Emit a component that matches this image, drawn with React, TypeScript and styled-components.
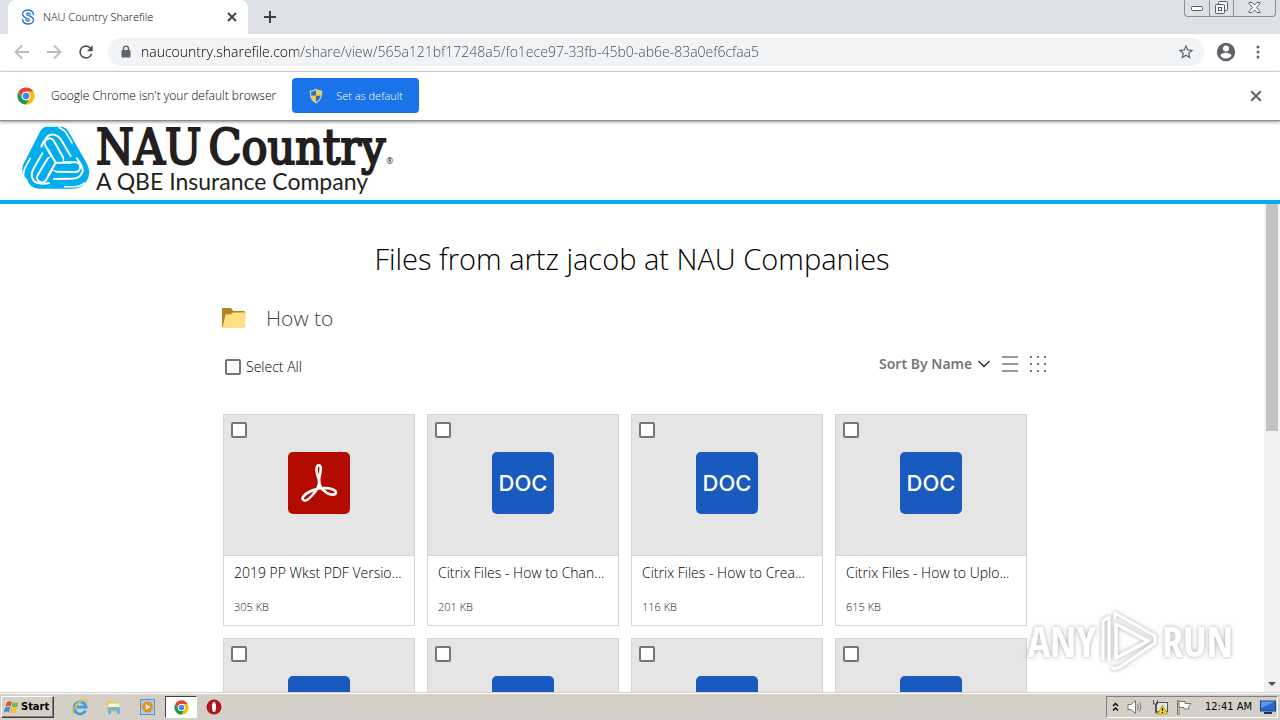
import React from "react";
import styled, { createGlobalStyle, css } from "styled-components";

const uiFont = '"Open Sans", "Noto Sans", sans-serif';
const pageFont = '"Noto Sans", "Open Sans", sans-serif';
const classicFont = '"DejaVu Sans Condensed", "DejaVu Sans", sans-serif';

const GlobalStyle = createGlobalStyle`
  * { box-sizing: border-box; }
  body { margin: 0; overflow: hidden; background: #fff; font-family: ${pageFont}; }
  button, input, select { font: inherit; color: inherit; margin: 0; }
  h1, h2, h3, p { margin: 0; font-weight: 400; }
  svg { display: block; flex: none; }
`;

const Desktop = styled.div`
  display: flex;
  flex-direction: column;
  height: 100vh;
`;

/* ---------- browser chrome ---------- */

const TabStrip = styled.div`
  display: flex;
  align-items: flex-start;
  flex: none;
  height: 34px;
  padding-left: 8px;
  background: #dee1e6;
`;

const Tab = styled.div`
  display: flex;
  align-items: center;
  width: 240px;
  height: 34px;
  padding: 0 10px 0 13px;
  border-radius: 8px 8px 0 0;
  background: #fff;
  color: #000;
  font: 300 11px/16px ${uiFont};
`;

const TabTitle = styled.span`
  flex: 1;
  padding-left: 8px;
  white-space: nowrap;
`;

const IconButton = styled.button<{ $size?: number }>`
  display: flex;
  align-items: center;
  justify-content: center;
  flex: none;
  width: ${(p) => p.$size ?? 28}px;
  height: ${(p) => p.$size ?? 28}px;
  padding: 0;
  border: 0;
  background: transparent;
`;

const NewTab = styled(IconButton)`
  margin: 3px 0 0 8px;
`;

const WindowControls = styled.div`
  display: flex;
  height: 17px;
  margin: 0 4px 0 auto;
  border: 1px solid #8b8f96;
  border-top: 0;
  border-radius: 0 0 4px 4px;
`;

const WindowButton = styled.button<{ $wide?: boolean }>`
  display: flex;
  align-items: center;
  justify-content: center;
  width: ${(p) => (p.$wide ? 42 : 24)}px;
  padding: 0 0 1px;
  border: 0;
  background: transparent;
  & + & { border-left: 1px solid #8b8f96; }
`;

const Toolbar = styled.div`
  display: flex;
  align-items: center;
  flex: none;
  height: 38px;
  padding: 0 8px 2px;
  gap: 4px;
  background: #fff;
  border-bottom: 1px solid #dadce0;
`;

const AddressBar = styled.div`
  display: flex;
  align-items: center;
  flex: 1;
  height: 28px;
  margin: 0 4px;
  padding: 0 4px 0 12px;
  border-radius: 14px;
  background: #f1f3f4;
`;

const AddressInput = styled.input`
  flex: 1;
  min-width: 0;
  height: 24px;
  padding: 0;
  margin-left: 9px;
  border: 0;
  outline: 0;
  font: 300 14px/20px ${uiFont};
  color: transparent;
  background: linear-gradient(to right, #000 157px, #45494d 157px);
  background-clip: text;
  -webkit-background-clip: text;
`;

const InfoBar = styled.div`
  display: flex;
  align-items: center;
  flex: none;
  height: 49px;
  padding: 0 14px 1px 17px;
  background: #fff;
  color: #000;
  font: 300 12px/16px ${uiFont};
  position: relative;
  border-bottom: 1px solid #8e8e8e;
  box-shadow: 0 1px 3px rgba(0, 0, 0, 0.45);
`;

const InfoText = styled.p`
  padding: 0 16px;
  font-weight: 300;
`;

const DefaultButton = styled.button`
  display: flex;
  align-items: center;
  gap: 13px;
  height: 35px;
  padding: 0 16px 0 17px;
  border: 0;
  border-radius: 4px;
  background: #1a73e8;
  color: #fff;
  font-size: 11px;
`;

const Spacer = styled.div`
  flex: 1;
`;

/* ---------- page ---------- */

const SiteHeader = styled.header`
  display: flex;
  align-items: flex-start;
  flex: none;
  height: 83px;
  padding: 5px 0 0 22px;
  gap: 6px;
  border-bottom: 4px solid #00aeef;
  background: #fff;
  color: #231f20;
`;

const Wordmark = styled.div`
  display: flex;
  flex-direction: column;
`;

const BrandName = styled.div`
  display: flex;
  align-items: baseline;
  font: 48px/42px "DejaVu Serif Condensed", "DejaVu Serif", serif;
  white-space: nowrap;
  -webkit-text-stroke: 2px #231f20;
`;

const BrandWord = styled.span`
  margin-right: 7px;
  & + & { margin-right: 1px; }
`;

const Registered = styled.span`
  -webkit-text-stroke: 0;
  font: 8px/8px ${pageFont};
`;

const BrandLine = styled.span`
  font: 400 23px/26px Lato, sans-serif;
  white-space: nowrap;
`;

const Viewport = styled.div`
  display: flex;
  flex: 1;
  min-height: 0;
`;

const Page = styled.main`
  flex: 1;
  overflow: hidden;
  padding-top: 34px;
`;

const Title = styled.h1`
  font: 300 29px/42px "Open Sans", ${pageFont};
  text-align: center;
  color: #000;
`;

const Content = styled.section`
  max-width: 840px;
  margin: 0 auto;
  padding: 0 0 0 10px;
`;

const FolderRow = styled.div`
  display: flex;
  align-items: center;
  gap: 20px;
  height: 32px;
  margin-top: 22px;
`;

const FolderName = styled.h2`
  font: 300 21px/32px "Open Sans", ${pageFont};
  color: #444;
`;

const ListTools = styled.div`
  display: flex;
  align-items: center;
  justify-content: space-between;
  height: 24px;
  margin-top: 18px;
  padding-left: 3px;
`;

const CheckLabel = styled.label`
  display: flex;
  align-items: center;
  gap: 5px;
  margin-top: 6px;
  font: 300 14px/20px ${uiFont};
  color: #000;
`;

const Check = styled.input.attrs({ type: "checkbox" })`
  appearance: none;
  flex: none;
  width: 16px;
  height: 16px;
  border: 2px solid #767676;
  border-radius: 2px;
  background: #fff;
`;

const ViewTools = styled.div`
  display: flex;
  align-items: center;
`;

const SortSelect = styled.select`
  appearance: none;
  padding: 0;
  border: 0;
  background: transparent;
  color: #777;
  font: 600 14px/20px ${pageFont};
`;

const SortLabel = styled.label`
  display: flex;
  align-items: center;
  gap: 5px;
  margin-right: 6px;
`;

const Grid = styled.ul`
  display: grid;
  grid-template-columns: repeat(auto-fill, 192px);
  gap: 12px;
  margin: 38px 0 0;
  padding: 0 0 0 1px;
  list-style: none;
`;

const Card = styled.li`
  height: 212px;
  border: 1px solid #d4d4d4;
  background: #fff;
`;

const Preview = styled.div`
  display: grid;
  grid-template-columns: 16px 1fr 16px;
  align-items: start;
  height: 141px;
  padding: 7px;
  border-bottom: 1px solid #d4d4d4;
  background: #e5e5e5;
`;

const tile = css`
  display: flex;
  align-items: center;
  justify-content: center;
  width: 62px;
  height: 62px;
  margin: 30px auto 0;
  border-radius: 5px;
`;

const DocTile = styled.div`
  ${tile}
  background: #185abd;
  color: #fff;
  font: 500 22px/28px Inter, sans-serif;
`;

const PdfTile = styled.div`
  ${tile}
  background: #b30b00;
`;

const FileName = styled.h3`
  padding: 7px 10px 0;
  font: 300 14px/20px ${uiFont};
  color: #000;
  white-space: nowrap;
`;

const FileSize = styled.p`
  padding: 16px 10px 0;
  font: 300 11px/16px ${uiFont};
  color: #222;
`;

const ScrollTrack = styled.div`
  display: flex;
  flex-direction: column;
  justify-content: space-between;
  align-items: center;
  width: 16px;
  padding-bottom: 6px;
  background: #f1f1f1;
`;

const ScrollThumb = styled.div`
  width: 12px;
  height: 47%;
  background: #c1c1c1;
`;

const Watermark = styled.div`
  position: fixed;
  right: 47px;
  bottom: 46px;
  display: flex;
  align-items: center;
  gap: 4px;
  color: #fff;
  font: 400 42px/66px "Open Sans Condensed", "Noto Sans ExtraCondensed", "Roboto Condensed", "Liberation Sans Narrow", Roboto, sans-serif;
  filter: drop-shadow(0 0 2px rgba(0, 0, 0, 0.35));
  pointer-events: none;
`;

/* ---------- taskbar ---------- */

const Taskbar = styled.footer`
  display: flex;
  align-items: center;
  flex: none;
  height: 28px;
  padding: 1px 2px 0 1px;
  border-top: 1px solid #d4d0c8;
  box-shadow: inset 0 1px 0 #fff;
  background: #d4d0c8;
  color: #000;
  font: 11px/16px ${classicFont};
`;

const StartButton = styled.button`
  display: flex;
  align-items: center;
  gap: 1px;
  height: 22px;
  padding: 0 4px 0 2px;
  margin-right: 9px;
  border: 1px solid;
  border-color: #fff #404040 #404040 #fff;
  box-shadow: inset -1px -1px 0 #808080;
  background: #d4d0c8;
  font: 700 11px/16px ${classicFont};
`;

const TaskButton = styled.button<{ $active?: boolean }>`
  display: flex;
  align-items: center;
  justify-content: center;
  width: ${(p) => (p.$active ? 32 : 34)}px;
  height: 22px;
  padding: 0;
  border: 1px solid;
  border-color: ${(p) => (p.$active ? "#404040 #fff #fff #404040" : "transparent")};
  background: ${(p) => (p.$active ? "#fff" : "transparent")};
`;

const Tray = styled.div`
  display: flex;
  align-items: center;
  gap: 8px;
  height: 22px;
  margin-left: auto;
  padding: 0 1px 0 5px;
  border: 1px solid;
  border-color: #808080 #fff #fff #808080;
`;

const Clock = styled.time`
  padding-left: 5px;
  white-space: nowrap;
`;

/* ---------- drawings ---------- */

const ShareFileIcon = () => (
  <svg width="14" height="16" viewBox="0 0 14 16" fill="none" stroke="#2f78c4" strokeLinecap="round" strokeWidth="1.400">
    <path d="M12.500 5.500C12 2.800 9.800 1 7 1 4 1 1.500 2.600 1.500 5c0 2.200 1.500 3 3.500 3.800 2 .7 3.300 1 3.300 2 0 .8-.6 1.200-1.400 1.200-1 0-1.700-.5-2-1.500" />
    <path d="M1.500 10.500C2 13.200 4.200 15 7 15c3 0 5.500-1.600 5.500-4 0-2.200-1.500-3-3.500-3.800-2-.7-3.300-1-3.300-2C5.700 4.400 6.300 4 7.100 4c1 0 1.700.5 2 1.500" />
  </svg>
);

const Cross = ({ size = 10, color = "#3c4043", weight = 1.8 }) => (
  <svg width={size} height={size} viewBox="0 0 10 10" stroke={color} strokeWidth={weight}>
    <path d="M1 1l8 8M9 1L1 9" />
  </svg>
);

const PlusIcon = () => (
  <svg width="14" height="14" viewBox="0 0 14 14" stroke="#3c4043" strokeWidth="2">
    <path d="M7 1v12M1 7h12" />
  </svg>
);

const Arrow = ({ flip = false }) => (
  <svg width="16" height="16" viewBox="0 0 16 16" fill="none" stroke="#babcbe" strokeWidth="1.800">
    <path d={flip ? "M1 8h13M8 1.500L14.500 8 8 14.500" : "M15 8H2M8 1.500L1.500 8 8 14.500"} />
  </svg>
);

const ReloadIcon = () => (
  <svg width="20" height="20" viewBox="0 0 24 24" fill="#4d5155">
    <path d="M17.650 6.350A7.960 7.960 0 0 0 12 4a8 8 0 1 0 7.730 10h-2.080A6 6 0 1 1 12 6c1.660 0 3.140.69 4.220 1.780L13 11h7V4l-2.350 2.350z" />
  </svg>
);

const LockIcon = () => (
  <svg width="12" height="14" viewBox="0 0 12 14">
    <rect x="1.500" y="5" width="9" height="7.500" rx="1" fill="#5f6368" />
    <path d="M3.500 5.500V3.600a2.500 2.500 0 0 1 5 0v1.900" fill="none" stroke="#5f6368" strokeWidth="1.400" />
  </svg>
);

const StarIcon = () => (
  <svg width="18" height="18" viewBox="0 0 24 24" fill="#5f6368">
    <path d="M22 9.240l-7.190-.62L12 2 9.190 8.630 2 9.240l5.460 4.730L5.820 21 12 17.270 18.180 21l-1.630-7.030L22 9.240zM12 15.400l-3.760 2.270 1-4.280-3.320-2.880 4.380-.38L12 6.100l1.710 4.040 4.380.38-3.320 2.880 1 4.280L12 15.400z" />
  </svg>
);

const ProfileIcon = () => (
  <svg width="22" height="22" viewBox="0 0 24 24" fill="#5f6368">
    <path d="M12 2a10 10 0 1 0 0 20 10 10 0 0 0 0-20zm0 3a3.300 3.300 0 1 1 0 6.600A3.300 3.300 0 0 1 12 5zm0 14.200a7.200 7.200 0 0 1-6-3.220c.03-2 4-3.080 6-3.080s5.970 1.090 6 3.080a7.200 7.200 0 0 1-6 3.220z" />
  </svg>
);

const MoreIcon = () => (
  <svg width="4" height="16" viewBox="0 0 4 16" fill="#5f6368">
    <circle cx="2" cy="3" r="1.500" /><circle cx="2" cy="8" r="1.500" /><circle cx="2" cy="13" r="1.500" />
  </svg>
);

const ChromeIcon = ({ size = 18 }) => (
  <svg width={size} height={size} viewBox="1 1 46 46">
    <circle cx="24" cy="24" r="22" fill="#fff" />
    <path d="M24 13h19A22 22 0 0 0 5 12.900L14.500 29.500A11 11 0 0 1 24 13z" fill="#ea4335" />
    <path d="M33.500 29.500L24 46A22 22 0 0 0 43.050 13H24a11 11 0 0 1 9.500 16.500z" fill="#fbbc04" />
    <path d="M14.500 29.500L4.950 13A22 22 0 0 0 24 46l9.500-16.500a11 11 0 0 1-19 0z" fill="#1e9a4b" />
    <circle cx="24" cy="24" r="11" fill="#fff" />
    <circle cx="24" cy="24" r="8.500" fill="#4285f4" />
  </svg>
);

const ShieldIcon = () => (
  <svg width="14" height="16" viewBox="0 0 14 16">
    <path d="M7 .5C5 2 3 2.500.8 2.500.6 8 1.500 12.500 7 15.500c5.500-3 6.400-7.500 6.200-13C11 2.500 9 2 7 .5z" fill="#c9ccd0" />
    <path d="M7 2C5.500 3 4 3.500 2.200 3.600 2.100 5.200 2.100 6.500 2.400 7.800H7z" fill="#2b6bc4" />
    <path d="M7 2c1.500 1 3 1.500 4.800 1.600.1 1.600.1 2.900-.2 4.200H7z" fill="#f8cf2c" />
    <path d="M2.400 7.800H7v6.300C4.500 12.700 2.900 10.600 2.400 7.800z" fill="#f8cf2c" />
    <path d="M11.600 7.800H7v6.300c2.500-1.400 4.100-3.500 4.600-6.300z" fill="#2b6bc4" />
  </svg>
);

const MinimizeIcon = () => (
  <svg width="13" height="6" viewBox="0 0 13 6"><rect x=".5" y="1.500" width="11" height="4" rx="1" fill="#fff" stroke="#555a63" /></svg>
);

const RestoreIcon = () => (
  <svg width="13" height="13" viewBox="0 0 13 13" fill="#f4f5f7" stroke="#555a63">
    <rect x="3.500" y=".5" width="9" height="9" rx="1" />
    <rect x=".5" y="3.500" width="9" height="9" rx="1" />
    <rect x="3.500" y="6.500" width="3" height="3" />
  </svg>
);

const WindowCloseIcon = () => (
  <svg width="13" height="11" viewBox="0 0 13 11">
    <path d="M1 .5h3L6.500 3 9 .5h3v1L8.500 5.500 12 9.500v1H9L6.500 8 4 10.500H1v-1l3.500-4L1 1.500z" fill="#fff" stroke="#555a63" />
  </svg>
);

const turns = [0, 120, 240];

const NauMark = () => (
  <svg width="68" height="64" viewBox="14 12 204 192">
    <path
      d="M86 14h46q14 1 22 15l55 96q12 24 2 46-12 26-40 29H66q-30-1-37-29-20-14-12-42l50-98q6-14 19-17z"
      fill="#00aeef"
    />
    <g transform="translate(115 122)" fill="none">
      {turns.map((turn) => (
        <g key={turn} transform={`rotate(${turn})`} stroke="#fff">
          <path d="M-18 -58L8 -12" strokeWidth="35" strokeLinecap="round" />
          <path d="M-44 -46Q-30 -82 -14 -84 6 -86 18 -66L46 -18" strokeWidth="6" />
          <path d="M8 -106Q28 -98 36 -82L50 -58" strokeWidth="5" />
        </g>
      ))}
      {turns.map((turn) => (
        <path key={turn} transform={`rotate(${turn})`} d="M-18 -58L10 -8" stroke="#00aeef" strokeWidth="23" strokeLinecap="round" />
      ))}
      {turns.map((turn) => (
        <path key={turn} transform={`rotate(${turn})`} d="M0 0L-22 -38" stroke="#fff" strokeWidth="6" strokeLinecap="round" />
      ))}
    </g>
  </svg>
);

const FolderIcon = () => (
  <svg width="24" height="22" viewBox="0 0 24 22">
    <path d="M0 1.500Q0 1 .8 1h8L11.500 4H22q1 0 1 1v15H0z" fill="#b08524" />
    <path d="M3.500 7.500L9 7.300 11 5.600h12.500q.7 0 .6.900l-1.500 13.500q-.1 1-1 1H.5z" fill="#ffe083" />
  </svg>
);

const Chevron = () => (
  <svg width="12" height="8" viewBox="0 0 12 8" fill="none" stroke="#222" strokeWidth="1.300"><path d="M.5 1L6 6.500 11.500 1" /></svg>
);

const ListIcon = () => (
  <svg width="16" height="18" viewBox="0 0 16 18" stroke="#999" strokeWidth="2"><path d="M0 2h16M0 9h16M0 16h16" /></svg>
);

const DotsIcon = () => (
  <svg width="18" height="18" viewBox="0 0 18 18" fill="#777">
    {[1, 8, 15].map((y) => [1, 8, 15].map((x) => <rect key={`${x}-${y}`} x={x} y={y} width="2" height="2" />))}
  </svg>
);

const AcrobatIcon = () => (
  <svg width="38" height="40" viewBox="0 0 38 40" fill="none" stroke="#fff" strokeWidth="2.600" strokeLinejoin="round">
    <path d="M19 2.200c-3.400 0-3 6.600-.9 12C21.200 22 16.500 27.500 12 32.500c-3 3.400-6.500 6.300-8.600 4.600-2.400-2 .9-5.700 6.600-8.600 4.700-2.400 9.500-3.500 14-3.500 6.500 0 12 1.700 12 4.600 0 2.800-5.300 2.600-9.300.3C22 27 18.600 21.500 19.300 15c.8-4 3-12.800-.3-12.800z" />
  </svg>
);

const AnyRunPlay = () => (
  <svg width="58" height="62" viewBox="0 0 58 62" fill="none" stroke="#fff" strokeWidth="3.500" strokeLinejoin="round">
    <path d="M16 14v34l32-17z" />
    <path d="M3 50V11l6-4v44" strokeWidth="3" />
    <path d="M15 9V3l40 23v7L20 57l-6 2-3-3" strokeWidth="3" />
  </svg>
);

const WindowsFlag = () => (
  <svg width="16" height="16" viewBox="0 0 17 16">
    <path d="M3 3q3-2 5.500-.5L7 7.500Q4.500 6 1.500 7.700z" fill="#e8562a" />
    <path d="M9.300 3q3 1.300 6.200-.4L14 8q-3 1.400-6-.2z" fill="#7cb83d" />
    <path d="M1.200 8.700q3-1.700 5.500-.2L5.300 13.500Q2.700 12-.2 13.600z" fill="#3f8fd8" />
    <path d="M7.600 8.900q3 1.300 6.100 0L12.300 14q-3 1.200-6-.2z" fill="#f8c02c" />
  </svg>
);

const IeIcon = () => (
  <svg width="18" height="18" viewBox="0 0 18 18" fill="none">
    <path d="M14.500 12.500A6 6 0 1 1 15 9H5.500" stroke="#3da0dc" strokeWidth="2.800" />
    <path d="M2.500 16C-.5 14.500 4 6 10 3c4-2 7-1.500 6 2" stroke="#eebf35" strokeWidth="1.400" />
  </svg>
);

const ExplorerIcon = () => (
  <svg width="18" height="18" viewBox="0 0 18 18">
    <path d="M2 3h5l1 1.500h7V14H2z" fill="#e9c65d" />
    <path d="M3.500 5.500h11V12h-11z" fill="#fff5c4" />
    <path d="M3 16V10.500q0-1.500 1.500-1.500h9q1.500 0 1.500 1.500V16h-3v-3.500H6V16z" fill="#69b7e0" />
  </svg>
);

const PlayerIcon = () => (
  <svg width="18" height="18" viewBox="0 0 18 18">
    <rect x="1.500" y="1.500" width="14" height="15" fill="#a9cdec" stroke="#5e93c4" />
    <circle cx="8.500" cy="9" r="5.500" fill="#f38b1c" />
    <path d="M6.800 6l4.700 3-4.700 3z" fill="#fff" />
  </svg>
);

const OperaIcon = () => (
  <svg width="16" height="16" viewBox="0 0 16 16">
    <circle cx="8" cy="8" r="7.500" fill="#b3141b" />
    <ellipse cx="8" cy="8" rx="2" ry="5" fill="#fff" />
  </svg>
);

const TrayChevrons = () => (
  <svg width="7" height="10" viewBox="0 0 7 10" fill="none" stroke="#000" strokeWidth="1.300"><path d="M1 4l2.500-2.500L6 4M1 8.500L3.500 6 6 8.500" /></svg>
);

const SpeakerIcon = () => (
  <svg width="17" height="16" viewBox="0 0 17 16" fill="none" stroke="#777">
    <path d="M1 5.500h3L8.500 1.500v13L4 10.500H1z" fill="#fff" />
    <path d="M10.500 5q1.500 3 0 6M12.500 3.500q3 4.500 0 9" />
  </svg>
);

const NetworkIcon = () => (
  <svg width="16" height="16" viewBox="0 0 16 16">
    <rect x="4.500" y="3.500" width="11" height="9" fill="#dfe6ec" stroke="#555" />
    <path d="M1.500 1v4h4V1M3.500 5v9h5" fill="none" stroke="#555" />
    <path d="M10.500 6l5 9h-10z" fill="#ffcf1a" stroke="#a68400" strokeWidth=".6" />
    <path d="M10.500 9v3M10.500 13v1" stroke="#000" strokeWidth="1.200" />
  </svg>
);

const FlagIcon = () => (
  <svg width="16" height="16" viewBox="0 0 16 16" fill="#fff" stroke="#777">
    <path d="M1.500 1.500h1.500v14H1.500z" />
    <path d="M3 2.500h6v2h6l-2.500 3 .5 2.500H8V8.500H3z" />
  </svg>
);

const MonitorIcon = () => (
  <svg width="16" height="16" viewBox="0 0 16 16">
    <rect x=".5" y="2" width="15" height="10" fill="#2468c8" stroke="#16407e" />
    <path d="M1 2.500h14L1 9z" fill="#5a9be8" />
    <path d="M4 13h8v2H4z" fill="#17355f" />
  </svg>
);

type FileItem = { name: string; size: string; kind: "pdf" | "doc" };

const files: FileItem[] = [
  { name: "2019 PP Wkst PDF Versio...", size: "305 KB", kind: "pdf" },
  { name: "Citrix Files - How to Chan...", size: "201 KB", kind: "doc" },
  { name: "Citrix Files - How to Crea...", size: "116 KB", kind: "doc" },
  { name: "Citrix Files - How to Uplo...", size: "615 KB", kind: "doc" },
];

const FileCard = ({ file }: { file?: FileItem }) => (
  <Card>
    <Preview>
      <Check aria-label={file ? `Select ${file.name}` : "Select file"} />
      {file?.kind === "pdf" ? <PdfTile><AcrobatIcon /></PdfTile> : <DocTile>{file ? "DOC" : null}</DocTile>}
    </Preview>
    {file && <FileName>{file.name}</FileName>}
    {file && <FileSize>{file.size}</FileSize>}
  </Card>
);

export default function App() {
  return (
    <Desktop>
      <GlobalStyle />
      <TabStrip>
        <Tab>
          <ShareFileIcon />
          <TabTitle>NAU Country Sharefile</TabTitle>
          <IconButton $size={12} aria-label="Close tab"><Cross /></IconButton>
        </Tab>
        <NewTab aria-label="New tab"><PlusIcon /></NewTab>
        <WindowControls>
          <WindowButton aria-label="Minimize"><MinimizeIcon /></WindowButton>
          <WindowButton aria-label="Restore"><RestoreIcon /></WindowButton>
          <WindowButton $wide aria-label="Close"><WindowCloseIcon /></WindowButton>
        </WindowControls>
      </TabStrip>
      <Toolbar>
        <IconButton aria-label="Back"><Arrow /></IconButton>
        <IconButton aria-label="Forward"><Arrow flip /></IconButton>
        <IconButton aria-label="Reload"><ReloadIcon /></IconButton>
        <AddressBar>
          <LockIcon />
          <AddressInput
            aria-label="Address"
            spellCheck={false}
            defaultValue="naucountry.sharefile.com/share/view/565a121bf17248a5/fo1ece97-33fb-45b0-ab6e-83a0ef6cfaa5"
          />
          <IconButton aria-label="Bookmark"><StarIcon /></IconButton>
        </AddressBar>
        <IconButton aria-label="Profile"><ProfileIcon /></IconButton>
        <IconButton aria-label="Menu"><MoreIcon /></IconButton>
      </Toolbar>
      <InfoBar>
        <ChromeIcon />
        <InfoText>Google Chrome isn't your default browser</InfoText>
        <DefaultButton><ShieldIcon />Set as default</DefaultButton>
        <Spacer />
        <IconButton $size={20} aria-label="Dismiss"><Cross size={12} color="#5f6368" weight={1.6} /></IconButton>
      </InfoBar>
      <SiteHeader>
        <NauMark />
        <Wordmark>
          <BrandName>
            <BrandWord>NAU</BrandWord>
            <BrandWord>Country</BrandWord>
            <Registered>®</Registered>
          </BrandName>
          <BrandLine>A QBE Insurance Company</BrandLine>
        </Wordmark>
      </SiteHeader>
      <Viewport>
        <Page>
          <Title>Files from artz jacob at NAU Companies</Title>
          <Content>
            <FolderRow>
              <FolderIcon />
              <FolderName>How to</FolderName>
            </FolderRow>
            <ListTools>
              <CheckLabel><Check />Select All</CheckLabel>
              <ViewTools>
                <SortLabel>
                  <SortSelect aria-label="Sort order"><option>Sort By Name</option></SortSelect>
                  <Chevron />
                </SortLabel>
                <IconButton aria-label="List view"><ListIcon /></IconButton>
                <IconButton aria-label="Grid view"><DotsIcon /></IconButton>
              </ViewTools>
            </ListTools>
            <Grid>
              {files.map((file) => <FileCard key={file.name} file={file} />)}
              {[0, 1, 2, 3].map((n) => <FileCard key={n} />)}
            </Grid>
          </Content>
        </Page>
        <ScrollTrack>
          <ScrollThumb />
          <svg width="8" height="4" viewBox="0 0 8 4" fill="#505050"><path d="M0 0h8L4 4z" /></svg>
        </ScrollTrack>
      </Viewport>
      <Taskbar>
        <StartButton><WindowsFlag />Start</StartButton>
        <TaskButton aria-label="Internet Explorer"><IeIcon /></TaskButton>
        <TaskButton aria-label="File Explorer"><ExplorerIcon /></TaskButton>
        <TaskButton aria-label="Media Player"><PlayerIcon /></TaskButton>
        <TaskButton $active aria-label="Chrome"><ChromeIcon size={15} /></TaskButton>
        <TaskButton aria-label="Opera"><OperaIcon /></TaskButton>
        <Tray>
          <TrayChevrons />
          <SpeakerIcon />
          <NetworkIcon />
          <FlagIcon />
          <Clock>12:41 AM</Clock>
          <MonitorIcon />
        </Tray>
      </Taskbar>
      <Watermark aria-hidden="true">
        <span>ANY</span>
        <AnyRunPlay />
        <span>RUN</span>
      </Watermark>
    </Desktop>
  );
}
